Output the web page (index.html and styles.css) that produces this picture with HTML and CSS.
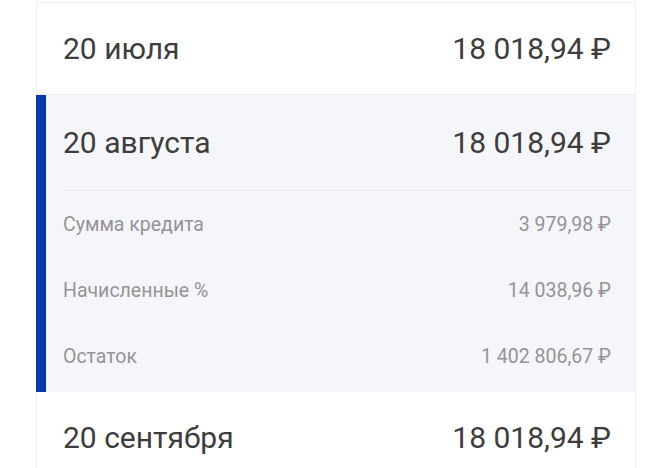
FILE: index.html
```html
<!DOCTYPE html>
<html lang="ru">

<head>
    <meta charset="UTF-8">
    <meta name="viewport" content="width=device-width, initial-scale=1.0">
    <title>График платежей</title>
    <link rel="stylesheet" href="styles.css">
</head>

<body>
    <div class="schedule">
        <div class="payment">
            <span class="date">20 июля</span>
            <span class="amount">18 018,94 ₽</span>
        </div>

        <div class="payment-open">
            <div class="payment head">
                <span class="date">20 августа</span>
                <span class="amount">18 018,94 ₽</span>
            </div>
            <div class="details">
                <div class="detail">
                    <span>Сумма кредита</span>
                    <span>3 979,98 ₽</span>
                </div>
                <div class="detail">
                    <span>Начисленные %</span>
                    <span>14 038,96 ₽</span>
                </div>
                <div class="detail">
                    <span>Остаток</span>
                    <span>1 402 806,67 ₽</span>
                </div>
            </div>
        </div>

        <div class="payment">
            <span class="date">20 сентября</span>
            <span class="amount">18 018,94 ₽</span>
        </div>
    </div>
</body>

</html>
```

FILE: styles.css
```css
body {
    font-family: Roboto, "Noto Sans", sans-serif;
    margin: 0;
    padding: 0;
    background-color: #fff;
    color: #333;
}

.schedule {
    width: 598px;
    margin: 2px 0 0 36px;
    border: 1px solid #f0f0f2;
    border-bottom: none;
    background-color: #fff;
}

.payment {
    display: flex;
    justify-content: space-between;
    align-items: center;
    height: 91px;
    padding: 0 24px 0 26px;
    font-size: 30px;
    color: #3d3d3d;
    border-bottom: 1px solid #eeeff2;
}

.payment-open {
    background-color: #f4f6f9;
    border-left: 10px solid #0a38ad;
    margin-left: -1px;
    padding-bottom: 3px;
}

.payment-open .head {
    height: 95px;
    padding-left: 17px;
    border-bottom: none;
}

.details {
    margin-left: 17px;
    border-top: 1px solid #e9ebef;
}

.detail {
    display: flex;
    justify-content: space-between;
    align-items: center;
    height: 66px;
    padding-right: 24px;
    font-size: 19.5px;
    color: #949496;
}
```
